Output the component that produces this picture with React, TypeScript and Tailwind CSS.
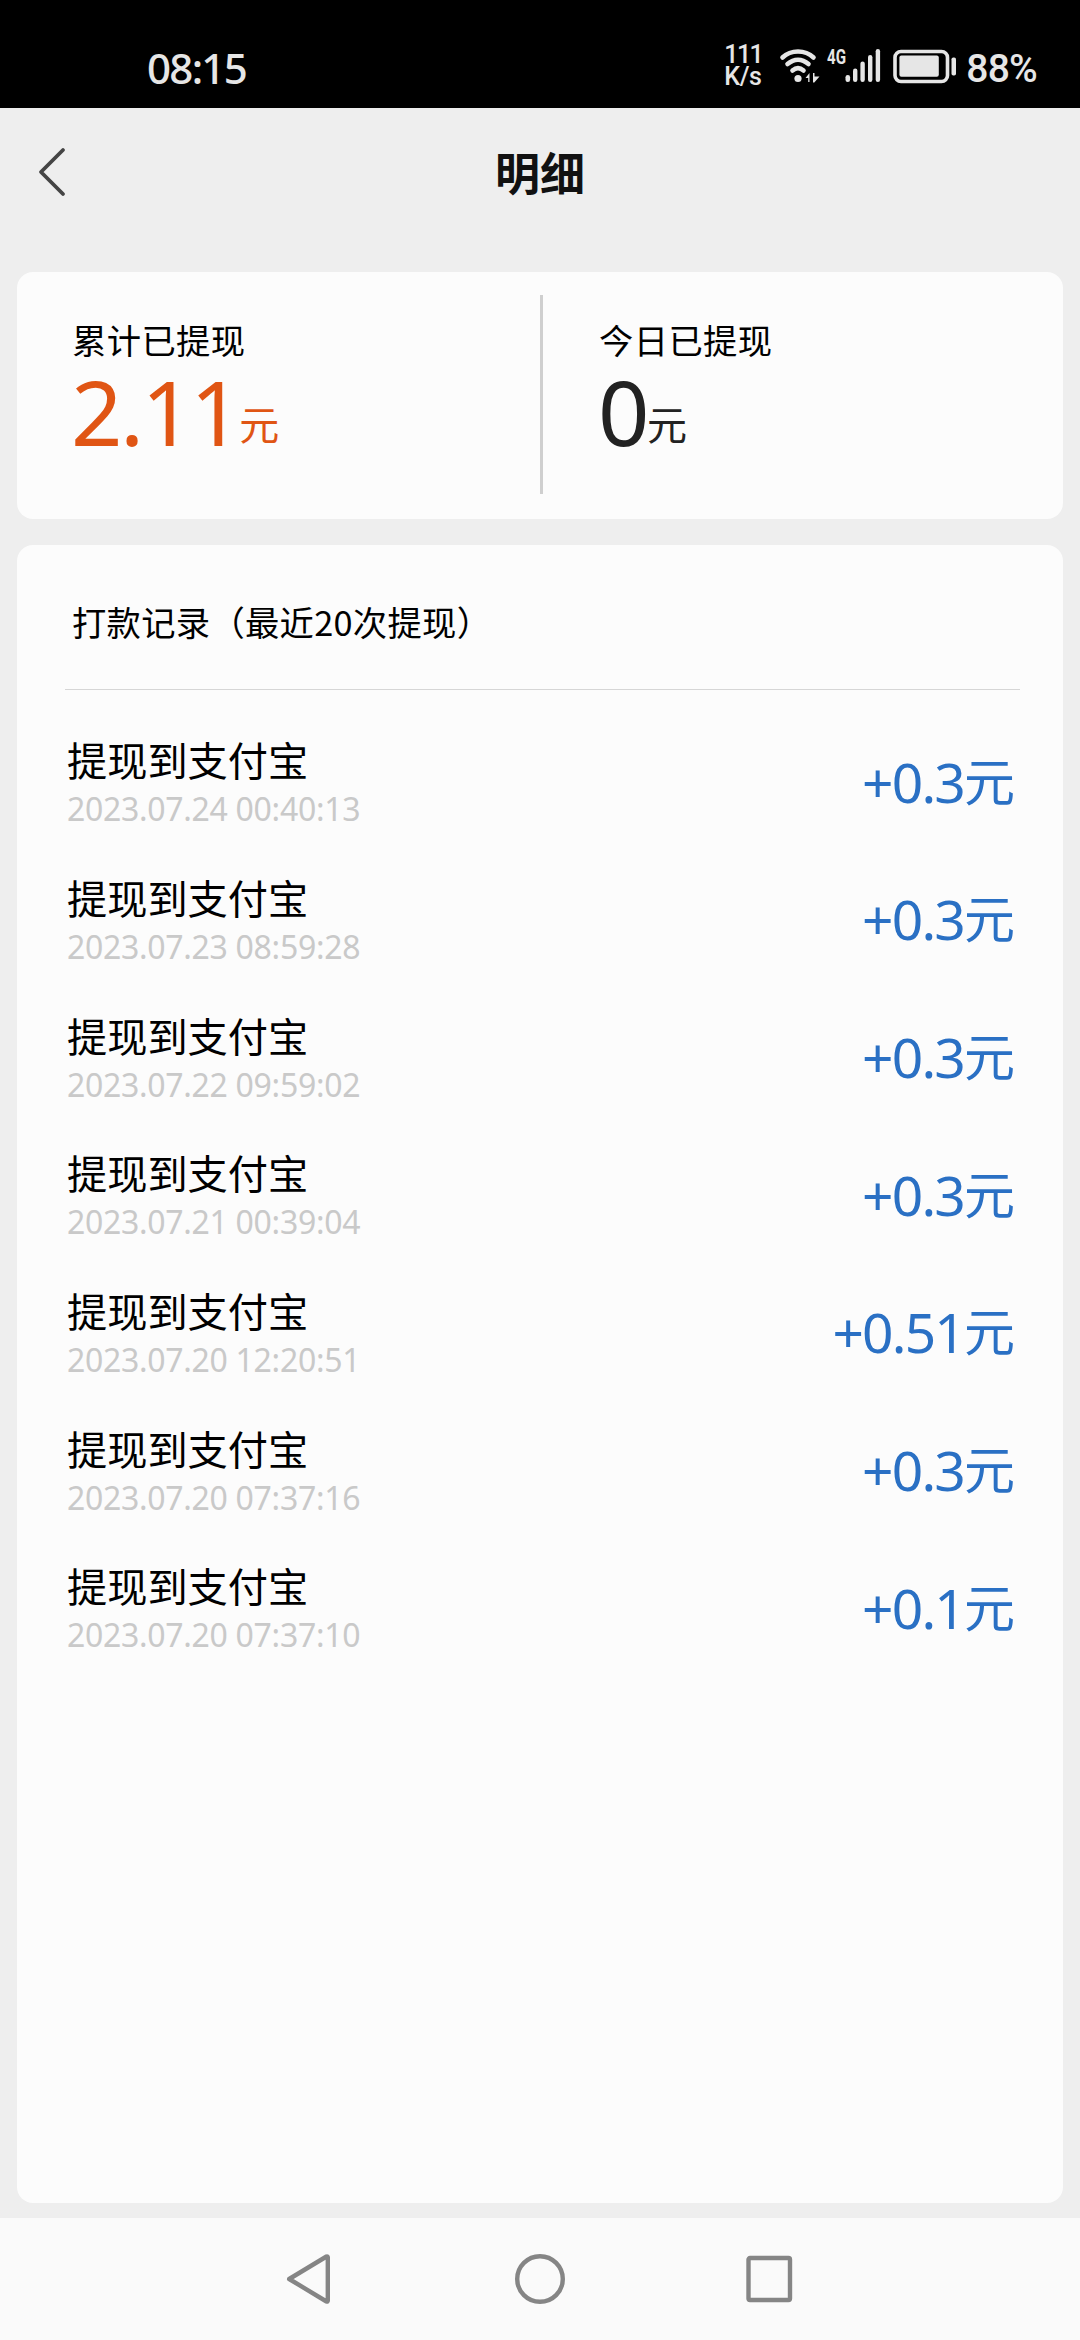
import React from 'react';

type PayoutRecord = {
    time: string;
    amount: string;
};

const records: PayoutRecord[] = [
    { time: '2023.07.24 00:40:13', amount: '+0.3' },
    { time: '2023.07.23 08:59:28', amount: '+0.3' },
    { time: '2023.07.22 09:59:02', amount: '+0.3' },
    { time: '2023.07.21 00:39:04', amount: '+0.3' },
    { time: '2023.07.20 12:20:51', amount: '+0.51' },
    { time: '2023.07.20 07:37:16', amount: '+0.3' },
    { time: '2023.07.20 07:37:10', amount: '+0.1' },
];

const StatusIcons = () => (
    <svg width="180" height="40" viewBox="0 0 180 40" fill="none" className="shrink-0 overflow-visible">
        {/* Wifi */}
        <g stroke="#e6e6e6" strokeWidth="4.6" strokeLinecap="round">
            <path d="M4.5 11.5 C13 3.5 27 3.5 35.5 11.5" />
            <path d="M9.5 18 C16 12.5 24 12.5 30.5 18" />
            <path d="M14.5 24.5 C18 21.5 22 21.5 25.5 24.5" />
        </g>
        <circle cx="20" cy="32.5" r="3.6" fill="#e6e6e6" />
        <path d="M31.5 27 V36 H30.2 V32 H27.5 Z" fill="#e6e6e6" />
        <path d="M35 27 H36.5 V30.5 H41.5 L36.3 36.5 H35 Z" fill="#e6e6e6" />
        {/* Signal bars */}
        <g fill="#e6e6e6">
            <rect x="67.5" y="29" width="4.6" height="7" rx="2.2" />
            <rect x="75" y="22.5" width="4.4" height="13.5" rx="2.2" />
            <rect x="82.4" y="15.5" width="4.4" height="20.5" rx="2.2" />
            <rect x="90" y="9" width="4.4" height="27" rx="2.2" />
            <rect x="97.7" y="3" width="4.4" height="33" rx="2.2" />
        </g>
        {/* Battery */}
        <rect x="117" y="5.5" width="52.5" height="30" rx="6" stroke="#e6e6e6" strokeWidth="3.6" />
        <rect x="121.4" y="9.6" width="39.4" height="21.2" rx="2" fill="#e6e6e6" />
        <rect x="173.5" y="11.5" width="4.5" height="18" rx="1.8" fill="#e6e6e6" />
        <text x="49" y="17.7" fill="#e6e6e6" fontFamily="Roboto, sans-serif" fontSize="20.5" fontWeight="700" textLength="19" lengthAdjust="spacingAndGlyphs">4G</text>
    </svg>
);

const StatusBar = () => (
    <div className="h-[108px] bg-black text-[#e6e6e6] flex justify-between items-start pl-[147px] pr-[43px]">
        <span className="mt-[48px] font-['Noto_Sans',sans-serif] text-[42px] leading-[40px] font-medium tracking-[-1.7px]">08:15</span>
        <div className="flex items-start font-['Roboto',sans-serif]">
            <div className="mt-[44px] mr-[18px] w-[36px] flex flex-col text-[25px] leading-[22px] font-medium">
                <span className="tracking-[-1.6px]">111</span>
                <span className="tracking-[-0.5px]">K/s</span>
            </div>
            <div className="mt-[46px] mr-[8px]"><StatusIcons /></div>
            <span className="mt-[49px] text-[39px] leading-[40px] font-medium tracking-[-0.8px]">88%</span>
        </div>
    </div>
);

type SummaryProps = {
    label: string;
    value: string;
    color: string;
};

const Summary = ({ label, value, color }: SummaryProps) => (
    <div className="flex flex-col pt-[47px]">
        <span className="text-[34.3px] leading-[40px] tracking-[0.4px] text-black">{label}</span>
        <div className={`mt-2 -ml-px h-[80px] flex items-end ${color}`}>
            <span className="font-['Noto_Sans',sans-serif] text-[90px] leading-[72px] tracking-[-2.6px]">{value}</span>
            <span className="mb-[4px] text-[40px] leading-[40px]">元</span>
        </div>
    </div>
);

const RecordRow = ({ time, amount }: PayoutRecord) => (
    <div className="h-[137.66px] flex items-center justify-between pl-[50px] pr-[48px]">
        <div className="flex flex-col gap-1">
            <span className="text-[40.2px] leading-[48px] text-black">提现到支付宝</span>
            <span className="font-['Noto_Sans',sans-serif] text-[32px] leading-[43px] tracking-[-0.3px] text-[#c9c9c9]">{time}</span>
        </div>
        <div className="pb-1 flex items-end text-[#2a70c4]">
            <span className="pb-px font-['Noto_Sans',sans-serif] text-[55px] leading-[60px] tracking-[-1.8px]">{amount}</span>
            <span className="pb-[4px] text-[51px] leading-[60px]">元</span>
        </div>
    </div>
);

const NavBar = () => (
    <div className="h-[122px] bg-[#fafafa] flex justify-center pt-[35px]">
        <svg width="520" height="52" viewBox="0 0 520 52" fill="none" stroke="#858585" strokeWidth="4.4" strokeLinejoin="round">
            <path d="M9.2 26 L46.5 3.5 Q47.8 3 47.8 4.5 V47.5 Q47.8 49 46.5 48.5 Z" />
            <circle cx="260" cy="26" r="22.8" />
            <rect x="468.5" y="5" width="41.5" height="42" rx="1.5" />
        </svg>
    </div>
);

const App = () => {
    return (
        <div className="w-[1080px] h-[2340px] flex flex-col overflow-hidden bg-[#eeeeee] font-['Noto_Sans_CJK_SC',sans-serif]">
            <StatusBar />

            <div className="h-[128px] mb-[36px] grid grid-cols-3 items-center">
                <svg width="30" height="50" viewBox="0 0 30 50" fill="none" stroke="#444444" strokeWidth="3.8" strokeLinecap="round" strokeLinejoin="round" className="ml-[37px]">
                    <path d="M26 3 L4 25 L26 47" />
                </svg>
                <span className="text-center text-[45px] leading-[60px] font-bold text-[#111111]">明细</span>
            </div>

            <div className="mx-[17px] h-[247px] rounded-2xl bg-[#fcfcfc] flex items-start pl-[55px]">
                <Summary label="累计已提现" value="2.11" color="text-[#e05514]" />
                <div className="mt-[23px] ml-auto mr-[56px] w-[3px] h-[199px] bg-[#cfcfcf]" />
                <div className="w-[464px]">
                    <Summary label="今日已提现" value="0" color="text-[#222222]" />
                </div>
            </div>

            <div className="mx-[17px] mt-[26px] mb-[15px] flex-1 rounded-2xl bg-[#fcfcfc]">
                <div className="ml-[48px] mr-[43px] pl-[7px] pt-[56px] pb-[48px] border-b border-[#d6d6d6] text-[34.3px] leading-[40px] tracking-[0.3px] text-black">
                    打款记录（最近20次提现）
                </div>
                <div className="pt-[24px] flex flex-col">
                    {records.map((record) => (
                        <RecordRow key={record.time} {...record} />
                    ))}
                </div>
            </div>

            <NavBar />
        </div>
    );
};

export default App;
